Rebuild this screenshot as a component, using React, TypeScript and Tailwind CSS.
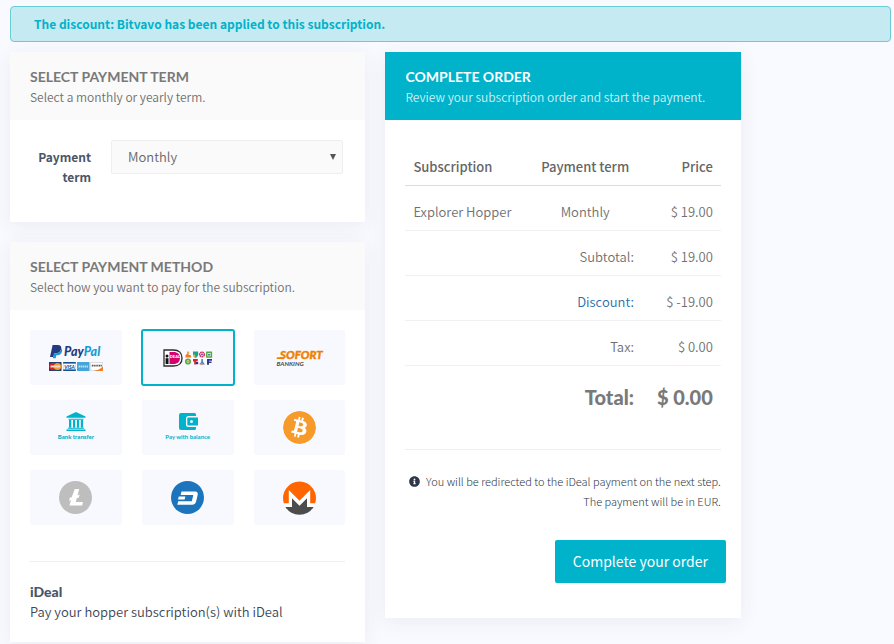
import { useState } from "react";
import type { ReactNode } from "react";
import { FaInfoCircle } from "react-icons/fa";
import { SiBitcoin } from "react-icons/si";

type Method = {
  id: string;
  label: string;
  logo: ReactNode;
};

function PaypalLogo() {
  return (
    <svg viewBox="0 0 54 28" className="h-[28px] w-[54px]" aria-hidden="true">
      <path d="M3.600 1h5.200c2.600 0 3.900 1.600 3.400 4-.6 3-2.600 4.300-5.400 4.300H5.200L4.400 13H1z" fill="#253b80" />
      <path d="M12.100 4.200c1 .8 1.200 2 .9 3.400-.5 2.400-2.200 3.600-4.600 3.600H7.300L6.700 14.300H3.900l1.100-5h2.200c2.700 0 4.500-1.800 4.900-5.100z" fill="#179bd7" />
      <text x="15" y="11.500" fontSize="12.500" fontWeight="900" fontStyle="italic" fontFamily="Lato, sans-serif">
        <tspan fill="#253b80">Pay</tspan>
        <tspan fill="#179bd7">Pal</tspan>
      </text>
      <rect x="0" y="18" width="12.500" height="9" fill="#27406f" />
      <circle cx="4" cy="22.500" r="3.600" fill="#d9222a" />
      <circle cx="8.500" cy="22.500" r="3.600" fill="#f0a030" />
      <rect x="1.500" y="21.500" width="9.500" height="2" fill="#f3d6cc" />
      <rect x="14.500" y="18.500" width="12" height="8" fill="#fff" stroke="#c9d3e0" strokeWidth=".6" />
      <rect x="14.200" y="18" width="12.600" height="1.600" fill="#1a4d8c" />
      <rect x="14.200" y="25.400" width="12.600" height="1.600" fill="#1a4d8c" />
      <text x="15.200" y="24.500" fontSize="5" fontWeight="900" fontStyle="italic" fill="#1a4d8c" fontFamily="Lato, sans-serif">VISA</text>
      <rect x="28" y="18" width="12.500" height="9" fill="#45a5d8" />
      <path d="M29.500 22.500h9.500" stroke="#b9e0f2" strokeWidth="2" strokeDasharray="1.600 .5" />
      <rect x="41.800" y="18.300" width="12" height="8.400" fill="#fff" stroke="#c9c9c9" strokeWidth=".6" />
      <path d="M54 22.500V27h-9.500c4-.6 7-2.200 9.500-4.500z" fill="#ef7f2d" />
      <path d="M42.800 21.700h10" stroke="#555" strokeWidth="1.800" strokeDasharray="1.300 .5" />
    </svg>
  );
}

function IdealLogo() {
  return (
    <svg viewBox="0 0 50 18" className="h-[18px] w-[50px]" aria-hidden="true">
      <path d="M1 1h9.500c5.500 0 8.500 3.200 8.500 8s-3 8-8.500 8H1z" fill="#fff" stroke="#2b2b2b" strokeWidth="1.300" />
      <path d="M6.500 3h4c4 0 6.500 2.200 6.500 6s-2.500 6-6.500 6h-4z" fill="#d50172" />
      <circle cx="4" cy="7" r="1.500" fill="#111" />
      <path d="M2.600 9.200h2.900V15H2.600z" fill="#111" />
      <text x="6.800" y="9" fontSize="4" fontWeight="900" fill="#fff" fontFamily="Lato, sans-serif">DEAL</text>
      <path d="M22.500 6.500l2-2.500 1 1.500 2.500 1v2h-5.500z" fill="#ef7a2a" />
      <path d="M24 2.600h2.200v2.200H24z" fill="#e5a53a" />
      <path d="M30 2.600h5.200v3.700l-2 2.500h-1.700V6H30z" fill="#17a48c" />
      <path d="M30 5.600h2.200v2.200H30z" fill="#f4b22c" />
      <circle cx="39" cy="5.500" r="2.300" fill="none" stroke="#d62f60" strokeWidth="1.600" strokeDasharray="1.600 .4" />
      <circle cx="39" cy="5.500" r="1" fill="#6a4ca0" />
      <path d="M43.800 3.200h4.600v4.800h-4.600z" fill="none" stroke="#5aa845" strokeWidth="1.500" />
      <path d="M45 4.800h2.200v1.800H45z" fill="#4b7fb4" />
      <circle cx="25" cy="12.500" r="2.200" fill="none" stroke="#5dac4a" strokeWidth="1.800" />
      <circle cx="25" cy="12.500" r="1" fill="#f08a2c" />
      <path d="M30 10h4.800v2.200H33.200v3.300h-2v-3H30z" fill="#d9252c" />
      <path d="M33 13h2.200v2.200H33z" fill="#273a86" />
      <path d="M38.300 10h1.600v2.500l2 3h-5.200l1.600-3z" fill="#4d82bb" />
      <path d="M36.800 14h3v1.500h-3z" fill="#ef8134" />
      <path d="M44 10h5v1.800h-3v.7h2.500V14H46v1.800h-2z" fill="#2d3c8c" />
    </svg>
  );
}

function SofortLogo() {
  return (
    <svg viewBox="0 0 48 18" className="h-[18px] w-[48px]" aria-hidden="true">
      <text x="4" y="10" fontSize="11.500" fontWeight="900" fontStyle="italic" fill="#ef8000" stroke="#ef8000" strokeWidth=".4" fontFamily="Lato, sans-serif">SOFORT</text>
      <path d="M1 8.200h7l-.5 1.900H.5z" fill="#ef8000" />
      <text x=".5" y="16.500" fontSize="6.300" fontWeight="900" fontStyle="italic" fill="#555" fontFamily="Lato, sans-serif">BANKING</text>
    </svg>
  );
}

function BankLogo() {
  return (
    <span className="flex flex-col items-center text-[#00b2ca]">
      <svg viewBox="0 0 20 19" className="h-[19px] w-[20px]" fill="currentColor" aria-hidden="true">
        <path d="M10 0l9.500 4.500v1.300H.5V4.500z" />
        <path d="M2.500 6.800h15v1h-15zM3 8h2.300v7.500H3zM7 8h2.200v7.500H7zM10.900 8h2.200v7.500h-2.200zM14.800 8h2.200v7.500h-2.200zM1.800 15.800h16.400v1H1.800zM.5 17.500h19V19H.5z" />
      </svg>
      <span className="text-[6px] leading-[12px] font-black">Bank transfer</span>
    </span>
  );
}

function BalanceLogo() {
  return (
    <span className="flex flex-col items-center text-[#00b2ca]">
      <svg viewBox="0 0 20 19" className="h-[19px] w-[20px]" fill="currentColor" aria-hidden="true">
        <path d="M3 1h13.500a1.500 1.500 0 0 1 1.500 1.500V4h-7.500A2.500 2.500 0 0 0 8 6.500v6a2.500 2.500 0 0 0 2.500 2.500H18v1.500a1.500 1.500 0 0 1-1.500 1.500H3a2 2 0 0 1-2-2V3a2 2 0 0 1 2-2z" />
        <path fillRule="evenodd" d="M10.300 5.500H20v8h-9.700a1 1 0 0 1-1-1v-6a1 1 0 0 1 1-1zm3.200 2.500a1.500 1.500 0 1 0 0 3 1.500 1.500 0 0 0 0-3z" />
      </svg>
      <span className="text-[6px] leading-[12px] font-bold">Pay with balance</span>
    </span>
  );
}

function LitecoinLogo() {
  return (
    <svg viewBox="0 0 33 33" className="size-[33px]" aria-hidden="true">
      <circle cx="16.500" cy="16.500" r="16.500" fill="#bebebe" />
      <path d="M15.800 8h4.400l-1.700 6.400 2.200-.9-.8 2.900-2.200.9-1 3.600h7.300l-.9 3.700H10.400l1.600-5.700-2 .8.800-2.900 2-.8z" fill="#fff" />
    </svg>
  );
}

function DashLogo() {
  return (
    <svg viewBox="0 0 33 33" className="size-[33px]" aria-hidden="true">
      <circle cx="16.500" cy="16.500" r="16.500" fill="#1c75bc" />
      <path d="M10.500 10.600h13.700c2 0 3 1.300 2.500 3.200l-1.600 6.700c-.6 2.200-2 3.300-4 3.300H6.300l.9-3.500h13.600l1.500-6.200H9.700z" fill="#fff" />
      <path d="M7.800 15.400h6.600l-.8 3.200H7z" fill="#fff" />
    </svg>
  );
}

function MoneroLogo() {
  return (
    <svg viewBox="0 0 33 34" className="h-[34px] w-[33px]" aria-hidden="true">
      <circle cx="16.500" cy="17" r="16" fill="#fff" />
      <path d="M16.500.5A16.500 16.500 0 0 0 .9 22.300h4.900V9l10.700 10.700L27.200 9v13.300h4.900A16.500 16.500 0 0 0 16.500.5z" fill="#ff6600" />
      <path d="M13.700 21.900L9 17.200v8.700H2.400a16.500 16.500 0 0 0 28.200 0H24v-8.700l-4.700 4.700-2.800 2.800z" fill="#4c4c4c" />
    </svg>
  );
}

const METHODS: Method[] = [
  { id: "paypal", label: "PayPal", logo: <PaypalLogo /> },
  { id: "ideal", label: "iDeal", logo: <IdealLogo /> },
  { id: "sofort", label: "Sofort Banking", logo: <SofortLogo /> },
  { id: "bank", label: "Bank transfer", logo: <BankLogo /> },
  { id: "balance", label: "Pay with balance", logo: <BalanceLogo /> },
  {
    id: "bitcoin",
    label: "Bitcoin",
    logo: <SiBitcoin className="size-[33px] rounded-full bg-white text-[#f79a2c]" />,
  },
  { id: "litecoin", label: "Litecoin", logo: <LitecoinLogo /> },
  { id: "dash", label: "Dash", logo: <DashLogo /> },
  { id: "monero", label: "Monero", logo: <MoneroLogo /> },
];

function Card({ title, subtitle, primary, children }: { title: string; subtitle: string; primary?: boolean; children: ReactNode }) {
  return (
    <section className="bg-white shadow-[0_4px_20px_rgba(50,50,93,0.07)]">
      <header className={primary ? "bg-[#00b2ca] px-5 pt-3.5 pb-[13px] text-white" : "bg-[#fafafa] px-5 pt-3.5 pb-[13px] text-[#797979]"}>
        <h2 className="font-[Lato] text-[14px] leading-[21px] font-bold uppercase">{title}</h2>
        <p className={primary ? "text-[12px] leading-5 font-[350] text-[#d0f1f6]" : "text-[12px] leading-5 font-[350] text-[#707070]"}>{subtitle}</p>
      </header>
      {children}
    </section>
  );
}

function OrderTable() {
  return (
    <table className="w-full table-fixed text-[13px] leading-5 font-[350] text-[#707070]">
      <colgroup>
        <col className="w-[39%]" />
        <col className="w-[36%]" />
        <col className="w-[25%]" />
      </colgroup>
      <thead>
        <tr className="h-[45px] border-b border-[#ddd] align-bottom text-[#666]">
          <th className="px-2 pb-2 text-left font-medium">Subscription</th>
          <th className="px-2 pb-2 text-center font-medium">Payment term</th>
          <th className="px-2 pb-2 text-right font-medium">Price</th>
        </tr>
      </thead>
      <tbody>
        <tr className="border-b border-[#f1f1f1]">
          <td className="px-2 pt-4 pb-2">Explorer Hopper</td>
          <td className="px-2 pt-4 pb-2 text-center">Monthly</td>
          <td className="px-2 pt-4 pb-2 text-right">$ 19.00</td>
        </tr>
        <tr className="border-b border-[#f1f1f1] text-right">
          <td className="px-2 pt-4 pb-2" colSpan={2}>Subtotal:</td>
          <td className="px-2 pt-4 pb-2">$ 19.00</td>
        </tr>
        <tr className="border-b border-[#f1f1f1] text-right">
          <td className="px-2 pt-4 pb-2" colSpan={2}>
            <a href="#discount" className="text-[#2a6ea8]">Discount:</a>
          </td>
          <td className="px-2 pt-4 pb-2">$ -19.00</td>
        </tr>
        <tr className="border-b border-[#f1f1f1] text-right">
          <td className="px-2 pt-4 pb-2" colSpan={2}>Tax:</td>
          <td className="px-2 pt-4 pb-2">$ 0.00</td>
        </tr>
        <tr className="text-right font-[Lato] text-[20px] leading-6 font-black text-[#797979]">
          <td className="px-2 pt-[19px] pb-2" colSpan={2}>Total:</td>
          <td className="px-2 pt-[19px] pb-2 whitespace-nowrap">$ 0.00</td>
        </tr>
      </tbody>
    </table>
  );
}

function App() {
  const [term, setTerm] = useState("monthly");
  const [method, setMethod] = useState("ideal");
  const selected = METHODS.find((m) => m.id === method)!;

  return (
    <div className="min-h-screen bg-[#f9faff] pt-1.5 pr-[3px] pb-0.5 pl-2.5 font-['Noto_Sans_CJK_SC',sans-serif] text-[#3d4757]">
      <div role="alert" className="rounded border border-[#6bccd6] bg-[#c5eaf2] px-[23px] py-[7px] text-[12px] leading-5 font-bold text-[#00b2ca]">
        The discount: Bitvavo has been applied to this subscription.
      </div>

      <div className="mt-2.5 grid grid-cols-12 items-start gap-5">
        <div className="col-span-5 space-y-5">
          <Card title="Select payment term" subtitle="Select a monthly or yearly term.">
            <div className="flex gap-5 pt-5 pr-[22px] pb-[35px] pl-5">
              <label htmlFor="term" className="w-[61px] pt-[7px] text-right text-[12px] leading-5 font-bold text-[#4a5568]">
                Payment term
              </label>
              <div className="relative h-[34px] flex-1">
                <select
                  id="term"
                  value={term}
                  onChange={(e) => setTerm(e.target.value)}
                  className="h-full w-full appearance-none rounded-xs border border-[#eee] bg-[#fafafa] px-4 text-[13px] leading-5 font-[350] text-[#666]"
                >
                  <option value="monthly">Monthly</option>
                  <option value="yearly">Yearly</option>
                </select>
                <svg viewBox="0 0 6 6" className="pointer-events-none absolute top-[14px] right-[7px] size-1.5" aria-hidden="true">
                  <path d="M0 0h6L3 6z" fill="#555" />
                </svg>
              </div>
            </div>
          </Card>

          <Card title="Select payment method" subtitle="Select how you want to pay for the subscription.">
            <div className="p-5">
              <div role="radiogroup" aria-label="Payment method" className="grid grid-cols-3 gap-x-5 gap-y-[15px]">
                {METHODS.map((m) => (
                  <label
                    key={m.id}
                    className="relative flex h-[55px] cursor-pointer items-center justify-center rounded-xs bg-[#f8f9fe] font-[Lato] outline-[#00b2ca] has-checked:outline-2 has-checked:-outline-offset-1"
                  >
                    <input
                      type="radio"
                      name="method"
                      className="sr-only"
                      aria-label={m.label}
                      checked={method === m.id}
                      onChange={() => setMethod(m.id)}
                    />
                    {m.logo}
                  </label>
                ))}
              </div>
              <hr className="mt-9 border-[#eee]" />
              <h3 className="mt-5 font-[Lato] text-[14px] leading-5 font-black text-[#4a5568]">{selected.label}</h3>
              <p className="text-[13px] leading-5 font-[350]">Pay your hopper subscription(s) with {selected.label}</p>
            </div>
          </Card>
        </div>

        <div className="col-span-5">
          <Card primary title="Complete order" subtitle="Review your subscription order and start the payment.">
            <div className="px-5 pt-5 pb-[35px]">
              <OrderTable />
              <hr className="mt-8 border-[#eee]" />
              <p className="mt-[21px] text-right text-[11px] leading-5 font-light text-[#2d3748]">
                <FaInfoCircle className="mr-1.5 inline-block size-[11px] align-[-1px]" />
                You will be redirected to the {selected.label} payment on the next step.
                <br />
                The payment will be in EUR.
              </p>
              <div className="-mr-[5px] mt-[29px] flex justify-end">
                <button type="button" className="h-[43px] rounded-xs bg-[#00b2ca] px-[18px] text-[14px] leading-5 text-white">
                  Complete your order
                </button>
              </div>
            </div>
          </Card>
        </div>
      </div>
    </div>
  );
}

export default App;
